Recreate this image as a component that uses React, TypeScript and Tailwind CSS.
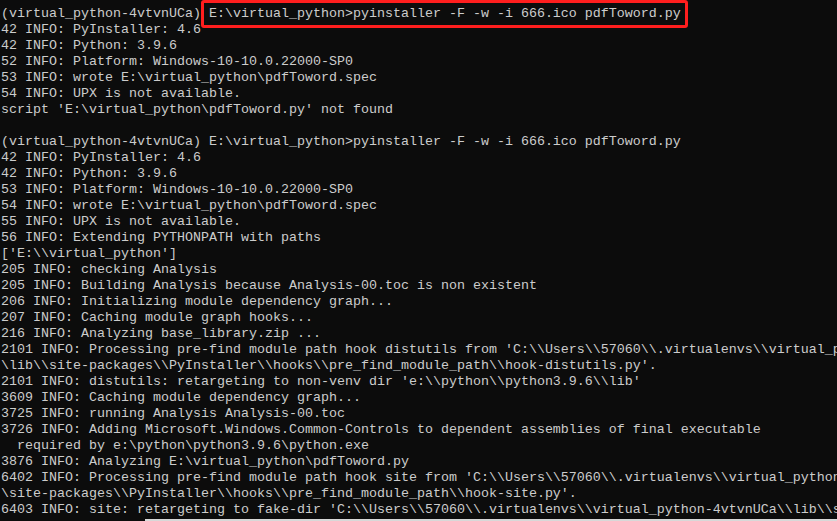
const lines = [
  "(virtual_python-4vtvnUCa) E:\\virtual_python>pyinstaller -F -w -i 666.ico pdfToword.py",
  "42 INFO: PyInstaller: 4.6",
  "42 INFO: Python: 3.9.6",
  "52 INFO: Platform: Windows-10-10.0.22000-SP0",
  "53 INFO: wrote E:\\virtual_python\\pdfToword.spec",
  "54 INFO: UPX is not available.",
  "script 'E:\\virtual_python\\pdfToword.py' not found",
  "",
  "(virtual_python-4vtvnUCa) E:\\virtual_python>pyinstaller -F -w -i 666.ico pdfToword.py",
  "42 INFO: PyInstaller: 4.6",
  "42 INFO: Python: 3.9.6",
  "53 INFO: Platform: Windows-10-10.0.22000-SP0",
  "54 INFO: wrote E:\\virtual_python\\pdfToword.spec",
  "55 INFO: UPX is not available.",
  "56 INFO: Extending PYTHONPATH with paths",
  "['E:\\\\virtual_python']",
  "205 INFO: checking Analysis",
  "205 INFO: Building Analysis because Analysis-00.toc is non existent",
  "206 INFO: Initializing module dependency graph...",
  "207 INFO: Caching module graph hooks...",
  "216 INFO: Analyzing base_library.zip ...",
  "2101 INFO: Processing pre-find module path hook distutils from 'C:\\\\Users\\\\57060\\\\.virtualenvs\\\\virtual_python-4vtvnUCa",
  "\\lib\\\\site-packages\\\\PyInstaller\\\\hooks\\\\pre_find_module_path\\\\hook-distutils.py'.",
  "2101 INFO: distutils: retargeting to non-venv dir 'e:\\\\python\\\\python3.9.6\\\\lib'",
  "3609 INFO: Caching module dependency graph...",
  "3725 INFO: running Analysis Analysis-00.toc",
  "3726 INFO: Adding Microsoft.Windows.Common-Controls to dependent assemblies of final executable",
  "  required by e:\\python\\python3.9.6\\python.exe",
  "3876 INFO: Analyzing E:\\virtual_python\\pdfToword.py",
  "6402 INFO: Processing pre-find module path hook site from 'C:\\\\Users\\\\57060\\\\.virtualenvs\\\\virtual_python-4vtvnUCa\\\\lib",
  "\\site-packages\\\\PyInstaller\\\\hooks\\\\pre_find_module_path\\\\hook-site.py'.",
  "6403 INFO: site: retargeting to fake-dir 'C:\\\\Users\\\\57060\\\\.virtualenvs\\\\virtual_python-4vtvnUCa\\\\lib\\\\site-packages",
]

export default function App() {
  return (
    <div className="w-[837px] h-[521px] overflow-hidden bg-[#0c0c0c] flex flex-col">
      <div className="relative flex-1 overflow-hidden pt-[6px] pl-px font-['Liberation_Mono',monospace] text-[13.33px] leading-[16px] text-[#cccccc]">
        {lines.map((line, i) => (
          <div key={i} className="h-[16px] whitespace-pre">
            {line}
          </div>
        ))}
        {/* highlight around the first command */}
        <div className="absolute left-[201px] top-0 w-[487px] h-[28px] border-[3px] border-[#ff1e1e] rounded-[3px]" />
      </div>
      <div className="flex h-[2px]">
        <div className="w-[145px] bg-[#0c0c0c]" />
        <div className="flex-1 bg-[#d8d8d8]" />
      </div>
    </div>
  )
}
